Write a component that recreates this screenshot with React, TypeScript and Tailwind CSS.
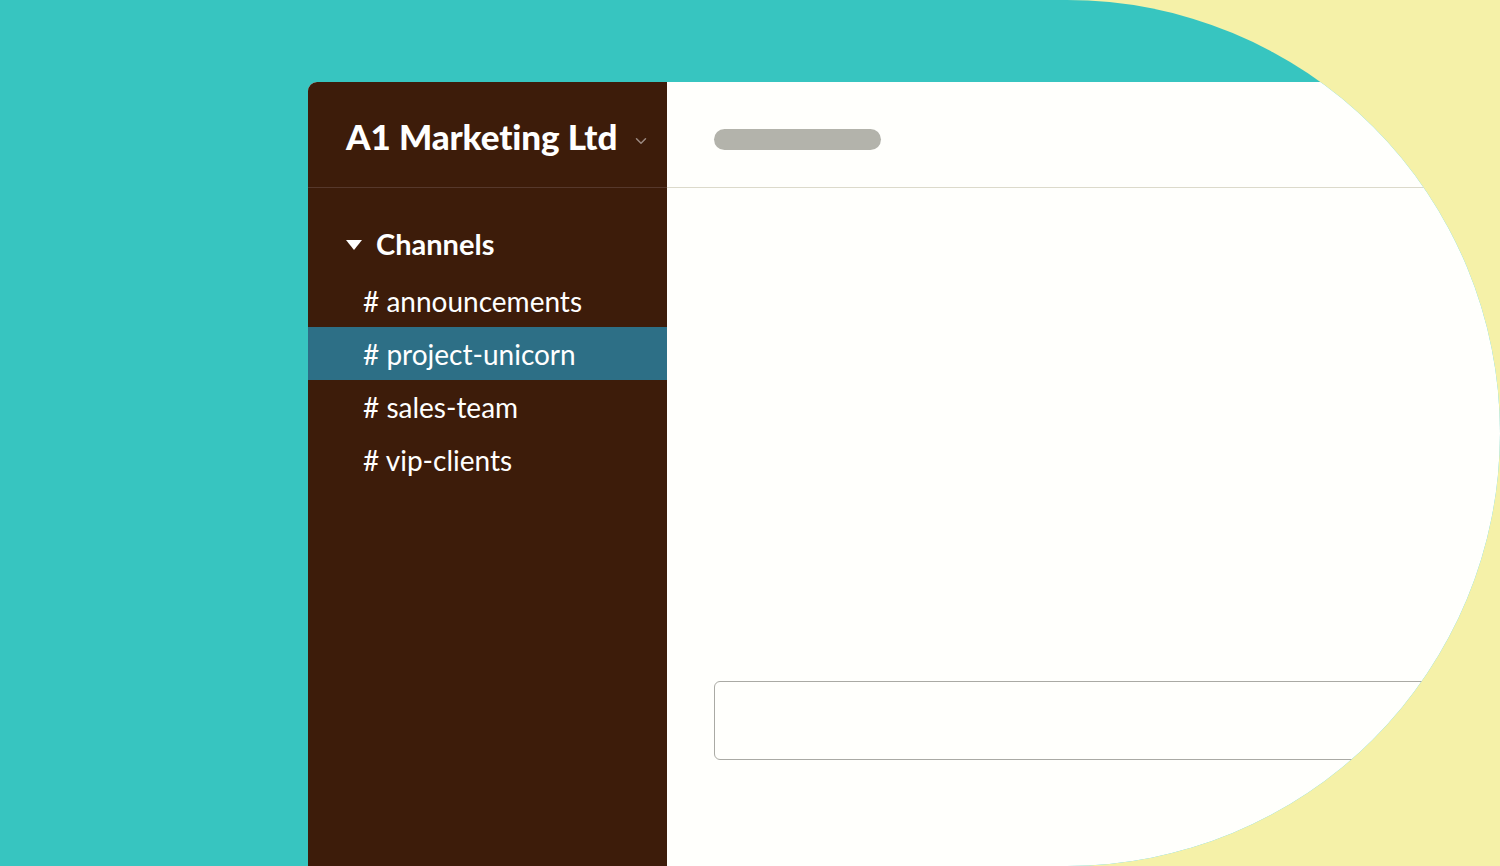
import { ChevronDown } from "lucide-react";

const channels = ["announcements", "project-unicorn", "sales-team", "vip-clients"];
const activeChannel = "project-unicorn";

export default function App() {
  return (
    <div className="w-[1500px] h-[866px] overflow-hidden bg-[#f5f1a8] font-['Lato','Noto_Sans',sans-serif]">
      {/* teal backdrop with the round right side */}
      <div className="h-full w-full overflow-hidden rounded-r-[433px] bg-[#37c5c0] pt-[82px] pl-[308px]">
        <div className="flex h-full w-[1300px] overflow-hidden rounded-tl-[9px] bg-[#fffffc]">
          {/* Sidebar */}
          <aside className="flex w-[359px] flex-col bg-[#3d1c0a] text-white">
            <div className="flex h-[106px] items-center border-b border-[#56382c] pl-[38px] pt-[3px]">
              <span className="text-[35px] font-black tracking-[-0.1px]">A1 Marketing Ltd</span>
              <ChevronDown className="ml-[15px] mt-[9px] h-[18px] w-[18px] text-[#9a8880]" strokeWidth={2} />
            </div>

            <div className="mt-[35px] flex h-[42px] items-center pl-[38px]">
              <svg width="16" height="10" viewBox="0 0 16 10" className="mt-[2px]">
                <path d="M0 0 L16 0 L8 10 Z" fill="white" />
              </svg>
              <span className="ml-[14px] text-[29px] font-bold">Channels</span>
            </div>

            <ul className="mt-[9px]">
              {channels.map((name) => (
                <li
                  key={name}
                  className={`flex h-[53px] items-center pl-[55px] text-[28px] ${
                    name === activeChannel ? "bg-[#2d6f86]" : ""
                  }`}
                >
                  # {name}
                </li>
              ))}
            </ul>
          </aside>

          {/* Main area */}
          <main className="flex flex-1 flex-col">
            <div className="h-[106px] border-b border-[#dcdacb] pl-[47px] pt-[47px]">
              <div className="h-[21px] w-[167px] rounded-full bg-[#b3b3ab]" />
            </div>
            <div className="flex-1" />
            <div className="px-[47px] pb-[106px]">
              <div className="h-[79px] rounded-[6px] border border-[#aaaaa4]" />
            </div>
          </main>
        </div>
      </div>
    </div>
  );
}
